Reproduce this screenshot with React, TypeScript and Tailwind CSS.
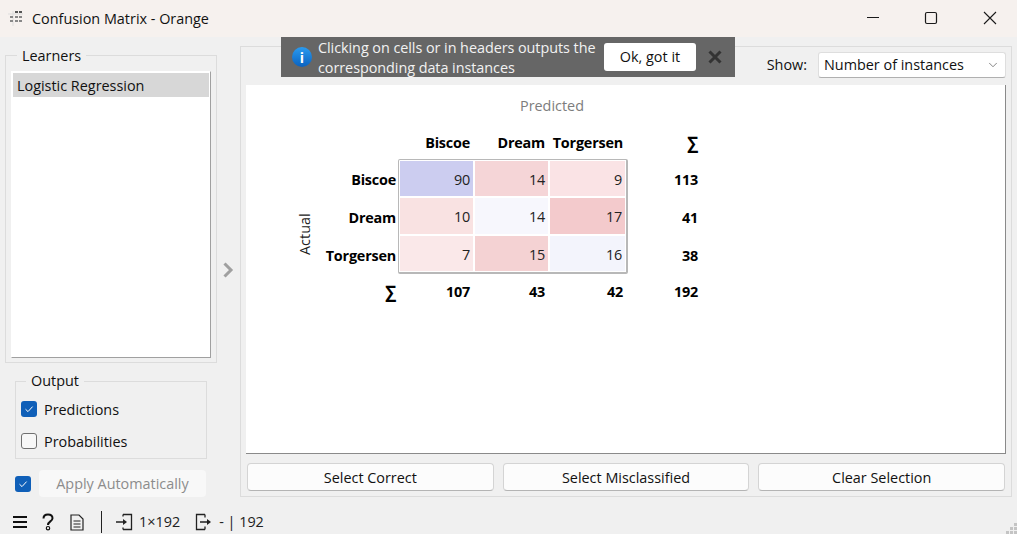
import { ChevronDown } from "lucide-react";

const font = "font-['Open_Sans','Noto_Sans',sans-serif]";

function TitleIcon() {
  const dots = [
    [7, 0], [11, 0],
    [2, 5], [7, 5], [11, 5],
    [2, 9], [7, 9], [11, 9],
  ];
  return (
    <svg width="15" height="15" viewBox="0 0 15 15" className="shrink-0">
      <path d="M5 0v15M0 3h15" stroke="#ddd" strokeWidth="1" />
      {dots.map(([x, y], i) => (
        <rect key={i} x={x} y={y} width="3" height="2" fill={i < 2 ? "#555" : "#888"} />
      ))}
    </svg>
  );
}

function WindowButtons() {
  return (
    <div className="flex items-center">
      <svg width="58" height="37" viewBox="0 0 58 37">
        <path d="M24 17.500h12" stroke="#1a1a1a" strokeWidth="1" />
      </svg>
      <svg width="58" height="37" viewBox="0 0 58 37">
        <rect x="24.500" y="12.500" width="11" height="11" rx="1.500" fill="none" stroke="#1a1a1a" strokeWidth="1.200" />
      </svg>
      <svg width="58" height="37" viewBox="0 0 58 37">
        <path d="M25 12l12 12M37 12L25 24" stroke="#1a1a1a" strokeWidth="1.100" />
      </svg>
    </div>
  );
}

function GroupBox({ title, className, titleClass, children }: { title: string; className: string; titleClass: string; children: React.ReactNode }) {
  return (
    <div className={"relative border border-[#dcdcdc] " + className}>
      <span className={"absolute bg-[#f0f0f0] text-[#111] " + titleClass}>{title}</span>
      {children}
    </div>
  );
}

function CheckBox({ checked }: { checked: boolean }) {
  return checked ? (
    <span className="flex h-4 w-4 shrink-0 items-center justify-center rounded-[3px] bg-[#0f5fb8]">
      <svg width="10" height="10" viewBox="0 0 10 10">
        <path d="M1.500 5.200L4 7.600 8.600 2.600" fill="none" stroke="#fff" strokeWidth="1" />
      </svg>
    </span>
  ) : (
    <span className="h-4 w-4 shrink-0 rounded-[3px] border border-[#707070] bg-[#f7f7f7]" />
  );
}

function Cell({ value, color }: { value: number; color: string }) {
  return <div className={"flex items-center justify-end pr-[3px] pt-[3px] text-[#222] " + color}>{value}</div>;
}

function RowLabel({ children }: { children: React.ReactNode }) {
  return <div className="flex items-center justify-end pr-[2px] pt-[3px] font-bold text-black">{children}</div>;
}

function Sum({ children, className = "" }: { children: React.ReactNode; className?: string }) {
  return <div className={"flex items-center justify-end pt-[3px] font-bold text-black " + className}>{children}</div>;
}

function Matrix() {
  return (
    <div className="ml-[50px] mt-[8px] flex leading-none tracking-[-0.2px]">
      <div className="flex w-[20px] items-center justify-center pr-[2px] pt-[34px]">
        <span className="-rotate-90 whitespace-nowrap tracking-normal text-[#222]">Actual</span>
      </div>
      <div className="grid grid-cols-[82px_230px_70px] grid-rows-[36px_115px_37px]">
        <div />
        <div className="grid grid-cols-[75px_75px_78px] pt-[1px] font-bold text-black">
          <Sum className="pr-[3px]">Biscoe</Sum>
          <Sum className="pr-[3px]">Dream</Sum>
          <Sum className="pr-[3px]">Torgersen</Sum>
        </div>
        <Sum className="text-[17px]">∑</Sum>

        <div className="grid grid-rows-[40px_36px_39px]">
          <RowLabel>Biscoe</RowLabel>
          <RowLabel>Dream</RowLabel>
          <RowLabel>Torgersen</RowLabel>
        </div>
        <div className="grid grid-cols-[73px_73px_75px] grid-rows-3 gap-[2px] rounded-[2px] border-t border-l border-[#b8b8b8] border-r-2 border-b-2 bg-white p-[1px]">
          <Cell value={90} color="bg-[#cccdf0]" />
          <Cell value={14} color="bg-[#f5d5d7]" />
          <Cell value={9} color="bg-[#fae3e5]" />
          <Cell value={10} color="bg-[#f9e2e2]" />
          <Cell value={14} color="bg-[#f7f7fd]" />
          <Cell value={17} color="bg-[#f3cacc]" />
          <Cell value={7} color="bg-[#fae8e9]" />
          <Cell value={15} color="bg-[#f4d2d3]" />
          <Cell value={16} color="bg-[#f3f4fc]" />
        </div>
        <div className="grid grid-rows-[40px_36px_39px]">
          <Sum>113</Sum>
          <Sum>41</Sum>
          <Sum>38</Sum>
        </div>

        <div className="-mt-[2px] flex items-center justify-end pr-[2px] text-[17px] font-bold text-black">∑</div>
        <div className="-mt-[3px] grid grid-cols-[75px_75px_78px]">
          <Sum className="pr-[3px]">107</Sum>
          <Sum className="pr-[3px]">43</Sum>
          <Sum className="pr-[3px]">42</Sum>
        </div>
        <Sum className="-mt-[3px]">192</Sum>
      </div>
    </div>
  );
}

function ActionButton({ label }: { label: string }) {
  return (
    <button className="h-[28px] flex-1 rounded-[4px] border border-[#d4d4d4] border-b-[#b4b4b4] bg-[#fcfcfc] pt-[1px] text-[#111]">
      {label}
    </button>
  );
}

function StatusBar() {
  return (
    <div className="relative flex h-[24px] items-center pl-[12px] text-[#222]">
      <svg width="16" height="14" viewBox="0 0 16 14">
        <path d="M1 2h14M1 7h14M1 12h14" stroke="#111" strokeWidth="2" />
      </svg>
      <svg width="14" height="18" viewBox="0 0 14 18" className="ml-[13px]">
        <path d="M2.500 5.500C2.500 3 4.500 1.500 7 1.500s4.500 1.400 4.500 3.700c0 3.300-4.500 3.100-4.500 6.800" fill="none" stroke="#111" strokeWidth="2" />
        <circle cx="7" cy="15.200" r="1.700" fill="none" stroke="#111" strokeWidth="1.200" />
      </svg>
      <svg width="14" height="17" viewBox="0 0 14 17" className="ml-[15px]">
        <path d="M1 1h8l4 4v11H1zM3.500 7h7M3.500 10h7M3.500 13h7" fill="none" stroke="#222" strokeWidth="1.200" />
      </svg>
      <div className="ml-[17px] h-[22px] w-px bg-[#222]" />
      <svg width="17" height="18" viewBox="0 0 17 18" className="ml-[14px]">
        <path d="M7 1.500h8.500v15H7M7 1.500v2M7 16.500v-2M0 9h9" fill="none" stroke="#222" strokeWidth="1.300" />
        <path d="M7 6l4 3-4 3z" fill="#222" />
      </svg>
      <span className="ml-[6px]">1×192</span>
      <svg width="17" height="18" viewBox="0 0 17 18" className="ml-[15px]">
        <path d="M10 1.500H1.500v15H10M10 1.500v3M10 16.500v-3M5 9h8" fill="none" stroke="#222" strokeWidth="1.300" />
        <path d="M12 6l4 3-4 3z" fill="#222" />
      </svg>
      <span className="ml-[7px]">- | 192</span>
      <svg width="12" height="12" viewBox="0 0 12 12" className="absolute bottom-0 right-0">
        <g fill="#c4c4c4">
          <rect x="9" y="1" width="3" height="3" />
          <rect x="5" y="5" width="3" height="3" />
          <rect x="9" y="5" width="3" height="3" />
          <rect x="1" y="9" width="3" height="3" />
          <rect x="5" y="9" width="3" height="3" />
          <rect x="9" y="9" width="3" height="3" />
        </g>
      </svg>
    </div>
  );
}

export default function App() {
  return (
    <div className={"relative flex h-[534px] w-[1017px] flex-col overflow-hidden bg-[#f0f0f0] text-[14.4px] " + font}>
      <div className="flex h-[37px] items-center justify-between bg-[#f6f1ee] pl-[8px]">
        <div className="flex items-center gap-[9px] text-[#111]">
          <TitleIcon />
          <span>Confusion Matrix - Orange</span>
        </div>
        <WindowButtons />
      </div>

      <div className="flex flex-1">
        <div className="flex w-[240px] flex-col pl-[5px]">
          <GroupBox title="Learners" className="mt-[18px] h-[308px] w-[212px] p-[5px] pt-[15px]" titleClass="left-[11px] -top-[11px] px-[5px]">
            <div className="h-[287px] border border-[#fff] border-r-[#a0a0a0] border-b-[#a0a0a0] bg-white p-[1px]">
              <div className="flex h-[24px] items-center bg-[#d7d7d7] pl-[4px] pt-[1px] text-[#111]">Logistic Regression</div>
            </div>
          </GroupBox>
          <GroupBox title="Output" className="ml-[10px] mt-[18px] h-[78px] w-[192px]" titleClass="left-[10px] -top-[12px] px-[5px]">
            <div className="flex flex-col gap-[16px] pl-[5px] pt-[19px]">
              <label className="flex h-[16px] items-center gap-[7px] text-[#111]"><CheckBox checked /><span className="pt-[2px]">Predictions</span></label>
              <label className="flex h-[16px] items-center gap-[7px] text-[#111]"><CheckBox checked={false} /><span className="pt-[2px]">Probabilities</span></label>
            </div>
          </GroupBox>
          <div className="ml-[10px] mt-[11px] flex items-center gap-[8px]">
            <CheckBox checked />
            <button className="h-[27px] w-[167px] rounded-[4px] bg-[#f8f8f8] text-[#8c8c8c]">Apply Automatically</button>
          </div>
        </div>

        <div className="mt-[9px] flex h-[451px] w-[772px] flex-col border border-[#dcdcdc] px-[5px]">
          <div className="flex h-[38px] items-center justify-end gap-[11px] pb-[2px]">
            <span className="text-[#111]">Show:</span>
            <div className="flex h-[26px] w-[188px] items-center justify-between rounded-[3px] border border-[#dedede] border-b-[#b0b0b0] bg-white pl-[5px] pr-[5px] text-[#111]">
              Number of instances
              <ChevronDown size={14} strokeWidth={1.200} color="#555" />
            </div>
          </div>
          <div className="h-[369px] border-r border-b border-[#8a8a8a] bg-white">
            <div className="pl-[274px] pt-[12px] leading-[18px] text-[#7d7d7d]">Predicted</div>
            <Matrix />
          </div>
          <div className="mt-[9px] flex gap-[9px] px-[1px]">
            <ActionButton label="Select Correct" />
            <ActionButton label="Select Misclassified" />
            <ActionButton label="Clear Selection" />
          </div>
        </div>
        <div className="absolute left-[228px] top-[270px] -translate-x-1/2 -translate-y-1/2">
          <svg width="12" height="16" viewBox="0 0 12 16">
            <path d="M2.500 1.500L9 8l-6.500 6.500" fill="none" stroke="#a0a0a0" strokeWidth="3" />
          </svg>
        </div>
      </div>

      <StatusBar />

      <div className="absolute left-[281px] top-[37px] flex h-[40px] w-[454px] items-center bg-[#666] pl-[11px]">
        <span className="flex h-[20px] w-[20px] shrink-0 items-center justify-center rounded-full bg-gradient-to-b from-[#2a9bf0] to-[#0b62c0] text-[14px] font-bold text-white">i</span>
        <span className="ml-[6px] w-[288px] pt-[1px] leading-[20px] tracking-[-0.05px] text-[#f2f2f2]">
          Clicking on cells or in headers outputs the corresponding data instances
        </span>
        <button className="-ml-[2px] h-[28px] w-[92px] rounded-[3px] bg-white text-[#111]">Ok, got it</button>
        <svg width="14" height="14" viewBox="0 0 14 14" className="ml-[12px]">
          <path d="M1.500 1.500l11 11M12.500 1.500l-11 11" stroke="#333" strokeWidth="3" />
        </svg>
      </div>
    </div>
  );
}
